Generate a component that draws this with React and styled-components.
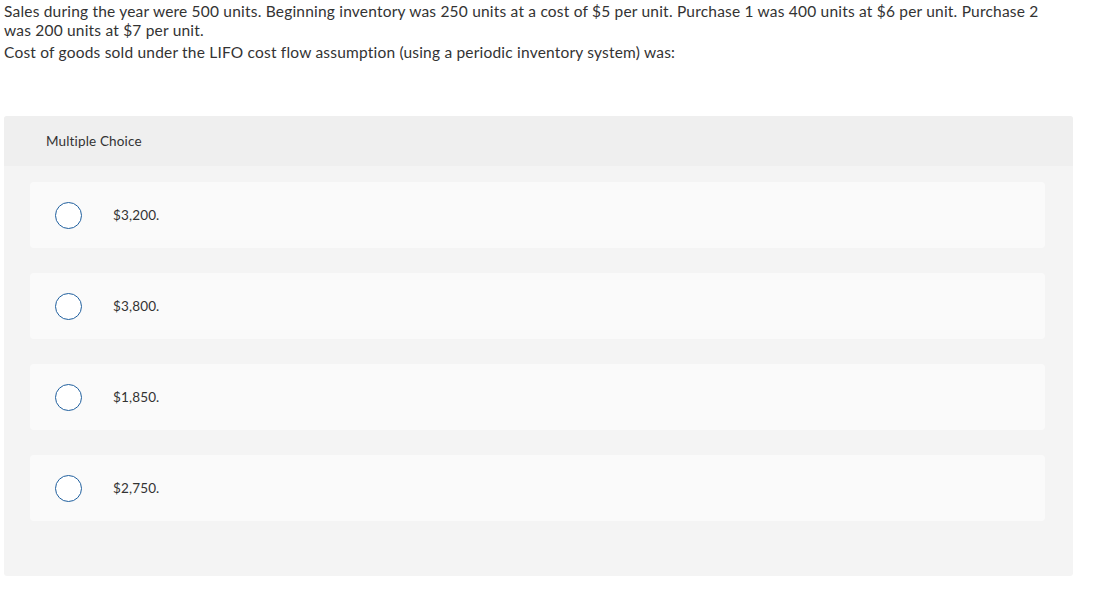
import React from 'react';
import styled, { createGlobalStyle } from 'styled-components';

const GlobalStyle = createGlobalStyle`
  body {
    margin: 0;
    background: #ffffff;
    font-family: Lato, 'Liberation Sans', sans-serif;
    color: #333333;
  }
`;

const choices = ['$3,200.', '$3,800.', '$1,850.', '$2,750.'];

const App = () => {
  return (
    <>
      <GlobalStyle />
      <Page>
        <Question>
          <Para>
            Sales during the year were 500 units. Beginning inventory was 250
            units at a cost of $5 per unit. Purchase 1 was 400 units at $6 per
            unit. Purchase 2 was 200 units at $7 per unit.
          </Para>
          <Para>
            Cost of goods sold under the LIFO cost flow assumption (using a
            periodic inventory system) was:
          </Para>
        </Question>

        <Panel>
          <PanelHeader>Multiple Choice</PanelHeader>
          <ChoiceList>
            {choices.map((choice) => (
              <Choice key={choice}>
                <Radio />
                <ChoiceText>{choice}</ChoiceText>
              </Choice>
            ))}
          </ChoiceList>
        </Panel>
      </Page>
    </>
  );
};

const Page = styled.div`
  padding: 2px 4px 0;
  width: 1069px;
`;

const Question = styled.div`
  width: 1052px;
  font-size: 15.5px;
  letter-spacing: 0.2px;
  line-height: 19px;
  color: #333333;
`;

const Para = styled.p`
  margin: 0 0 3px;
`;

const Panel = styled.div`
  margin-top: 54px;
  background: #f4f4f4;
  border-radius: 3px;
  padding-bottom: 55px;
`;

const PanelHeader = styled.div`
  height: 50px;
  display: flex;
  align-items: center;
  padding-left: 42px;
  background: #efefef;
  border-radius: 3px 3px 0 0;
  font-size: 13.5px;
  letter-spacing: 0.15px;
  color: #333333;
`;

const ChoiceList = styled.div`
  display: flex;
  flex-direction: column;
  gap: 25px;
  padding: 16px 28px 0 26px;
`;

const Choice = styled.div`
  height: 66px;
  display: flex;
  align-items: center;
  background: #fafafa;
  border-radius: 4px;
  padding-left: 25px;
`;

const Radio = styled.span`
  width: 25px;
  height: 25px;
  border: 1.5px solid #1f5f9e;
  border-radius: 50%;
  background: #ffffff;
  flex-shrink: 0;
`;

const ChoiceText = styled.span`
  margin-left: 31px;
  font-size: 13.5px;
  letter-spacing: 0.15px;
  color: #333333;
`;

export default App;
